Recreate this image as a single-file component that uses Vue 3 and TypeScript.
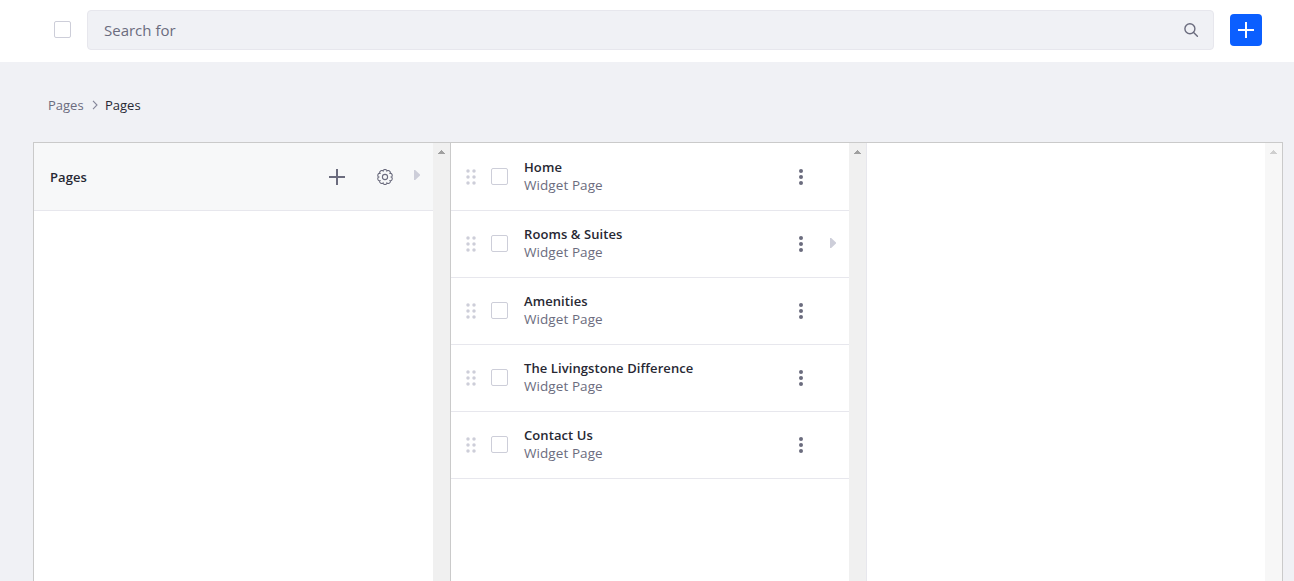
<script setup lang="ts">
interface PageItem {
  title: string
  kind: string
  slug: string
  hasChildren: boolean
}

const pages: PageItem[] = [
  { title: 'Home', kind: 'Widget Page', slug: 'home', hasChildren: false },
  { title: 'Rooms & Suites', kind: 'Widget Page', slug: 'rooms', hasChildren: true },
  { title: 'Amenities', kind: 'Widget Page', slug: 'amenities', hasChildren: false },
  { title: 'The Livingstone Difference', kind: 'Widget Page', slug: 'difference', hasChildren: false },
  { title: 'Contact Us', kind: 'Widget Page', slug: 'contact', hasChildren: false },
]

// Scalloped gear outline: rounded lobes separated by narrow notches
const gearPath = (() => {
  const lobes = 10
  const points: string[] = []
  for (let i = 0; i <= 200; i++) {
    const a = (i / 200) * Math.PI * 2 - Math.PI / 2
    const phase = ((a + Math.PI / 2) * lobes) / 2
    const r = 6.3 + 1.15 * Math.sqrt(Math.abs(Math.cos(phase)))
    points.push(`${(8 + r * Math.cos(a)).toFixed(2)} ${(8 + r * Math.sin(a)).toFixed(2)}`)
  }
  return `M${points.join('L')}Z`
})()
</script>

<template>
  <div class="app">
    <header class="toolbar">
      <span class="checkbox"></span>
      <div class="search">
        <span class="search-text">Search for</span>
        <svg class="search-icon" width="16" height="16" viewBox="0 0 16 16">
          <circle cx="6.9" cy="6.7" r="5" />
          <path d="M10.6 10.4L14.4 14.2" />
        </svg>
      </div>
      <button class="add" aria-label="Add">
        <svg width="16" height="16" viewBox="0 0 16 16"><path d="M8 0V16M0 8H16" /></svg>
      </button>
    </header>

    <nav class="breadcrumb">
      <span class="crumb">Pages</span>
      <svg width="6" height="10" viewBox="0 0 6 10"><path d="M1 .8L5 5L1 9.2" /></svg>
      <span class="crumb active">Pages</span>
    </nav>

    <main class="columns">
      <section class="column first">
        <div class="list">
          <div class="root">
            <span class="title root-title">Pages</span>
            <svg class="plus" width="16" height="16" viewBox="0 0 16 16"><path d="M8 0V16M0 8H16" /></svg>
            <svg class="gear" width="16" height="16" viewBox="0 0 16 16">
              <path :d="gearPath" />
              <circle cx="8" cy="8" r="2.6" />
            </svg>
            <svg class="caret" width="6" height="10" viewBox="0 0 6 10"><path d="M0 0H1.2L6 4.4V5.6L1.2 10H0Z" /></svg>
          </div>
        </div>
        <div class="scrollbar">
          <svg width="7" height="4" viewBox="0 0 7 4" shape-rendering="crispEdges"><path d="M3 0h1v1h1v1h1v1h1v1H0V3h1V2h1V1h1z" /></svg>
        </div>
      </section>

      <section class="column second">
        <div class="list">
          <div v-for="page in pages" :key="page.slug" class="row">
            <svg class="drag" width="10" height="16" viewBox="0 0 10 16">
              <circle cx="2" cy="2" r="1.75" /><circle cx="8" cy="2" r="1.75" />
              <circle cx="2" cy="8" r="1.75" /><circle cx="8" cy="8" r="1.75" />
              <circle cx="2" cy="14" r="1.75" /><circle cx="8" cy="14" r="1.75" />
            </svg>
            <span class="checkbox"></span>
            <div class="info">
              <span class="title">{{ page.title }}</span>
              <span class="kind">{{ page.kind }}</span>
            </div>
            <svg class="kebab" width="4" height="16" viewBox="0 0 4 16">
              <circle cx="2" cy="2" r="2" /><circle cx="2" cy="8" r="2" /><circle cx="2" cy="14" r="2" />
            </svg>
            <span class="child-slot">
              <svg v-if="page.hasChildren" class="caret" width="6" height="10" viewBox="0 0 6 10"><path d="M0 0H1.2L6 4.4V5.6L1.2 10H0Z" /></svg>
            </span>
          </div>
        </div>
        <div class="scrollbar">
          <svg width="7" height="4" viewBox="0 0 7 4" shape-rendering="crispEdges"><path d="M3 0h1v1h1v1h1v1h1v1H0V3h1V2h1V1h1z" /></svg>
        </div>
      </section>

      <section class="column third">
        <div class="list"></div>
        <div class="scrollbar disabled">
          <svg width="7" height="4" viewBox="0 0 7 4" shape-rendering="crispEdges"><path d="M3 0h1v1h1v1h1v1h1v1H0V3h1V2h1V1h1z" /></svg>
        </div>
      </section>
    </main>
  </div>
</template>

<style>
body {
  margin: 0;
  overflow: hidden;
}
</style>

<style scoped>
.app {
  display: flex;
  flex-direction: column;
  width: 1294px;
  height: 581px;
  overflow: hidden;
  background: #f0f1f5;
  color: #272833;
  font-family: "Open Sans", "Noto Sans", sans-serif;
  font-size: 13px;
}
svg {
  display: block;
  flex: none;
}
.toolbar {
  display: flex;
  flex: none;
  align-items: center;
  box-sizing: border-box;
  height: 62px;
  padding: 0 32px 2px 54px;
  background: #fff;
}
.checkbox {
  flex: none;
  box-sizing: border-box;
  width: 17px;
  height: 17px;
  border: 1px solid #cdced9;
  border-radius: 2px;
  background: #fff;
}
.toolbar .checkbox {
  margin-bottom: 1px;
}
.search {
  display: flex;
  align-items: center;
  justify-content: space-between;
  box-sizing: border-box;
  width: 1127px;
  height: 40px;
  margin: 0 16px;
  padding: 0 14px 0 16px;
  border: 1px solid #e7e7ed;
  border-radius: 4px;
  background: #f0f1f5;
}
.search-text {
  color: #6b6c7e;
  font-size: 15px;
  line-height: 20px;
}
.search-icon {
  fill: none;
  stroke: #6b6c7e;
  stroke-width: 1.4;
  stroke-linecap: round;
}
.add {
  display: flex;
  flex: none;
  align-items: center;
  justify-content: center;
  width: 32px;
  height: 32px;
  padding: 0;
  border: 0;
  border-radius: 4px;
  background: #0b5fff;
}
.add svg {
  stroke: #fff;
  stroke-width: 2;
}
.breadcrumb {
  display: flex;
  flex: none;
  align-items: center;
  height: 20px;
  margin: 33px 0 27px 48px;
}
.breadcrumb svg {
  margin: -1px 7px 0 8px;
  fill: none;
  stroke: #85869a;
  stroke-width: 1.1;
}
.crumb {
  width: 36px;
  line-height: 20px;
  white-space: nowrap;
  color: #6b6c7e;
}
.crumb.active {
  color: #272833;
}
.columns {
  display: flex;
  flex: 1;
  box-sizing: border-box;
  width: 1250px;
  margin-left: 33px;
  border: 1px solid #cacaca;
  border-bottom: 0;
  background: #fff;
}
.column {
  display: flex;
  box-sizing: border-box;
  width: 416px;
}
.first {
  width: 417px;
  border-right: 1px solid #cacaca;
}
.second {
  border-right: 1px solid #e7e7ed;
}
.third {
  width: 415px;
}
.list {
  flex: 1;
}
.scrollbar {
  display: flex;
  justify-content: center;
  box-sizing: border-box;
  width: 17px;
  padding-top: 7px;
  background: #f0f0f0;
}
.scrollbar svg {
  fill: #a0a0a0;
}
.scrollbar.disabled {
  background: #f7f7f7;
}
.scrollbar.disabled svg {
  fill: #cfcfcf;
}
.root,
.row {
  display: flex;
  align-items: center;
  box-sizing: border-box;
  height: 67px;
  border-bottom: 1px solid #e7e7ed;
}
.root {
  height: 68px;
  padding: 1px 13px 0 16px;
  background: #f7f8f9;
}
.root-title {
  margin-right: auto;
}
.plus {
  stroke: #6b6c7e;
  stroke-width: 2;
}
.gear {
  margin: 0 21px 0 32px;
  fill: none;
  stroke: #6b6c7e;
  stroke-width: 1.1;
}
.caret {
  fill: #cdced9;
}
.root .caret {
  margin-bottom: 4px;
}
.row {
  padding: 0 13px 0 15px;
}
.row:first-child {
  height: 68px;
  padding-top: 1px;
}
.row .checkbox {
  margin: 0 16px 1px 15px;
}
.drag {
  fill: #cdced9;
}
.info {
  display: flex;
  flex: 1;
  flex-direction: column;
  padding-bottom: 2px;
}
.title {
  font-weight: 600;
  line-height: 18px;
  letter-spacing: 0.09px;
  white-space: nowrap;
}
.kind {
  color: #6b6c7e;
  font-size: 13.5px;
  line-height: 18px;
  letter-spacing: 0.08px;
}
.kebab {
  fill: #6b6c7e;
}
.child-slot {
  width: 6px;
  margin: 0 0 2px 27px;
}
</style>
